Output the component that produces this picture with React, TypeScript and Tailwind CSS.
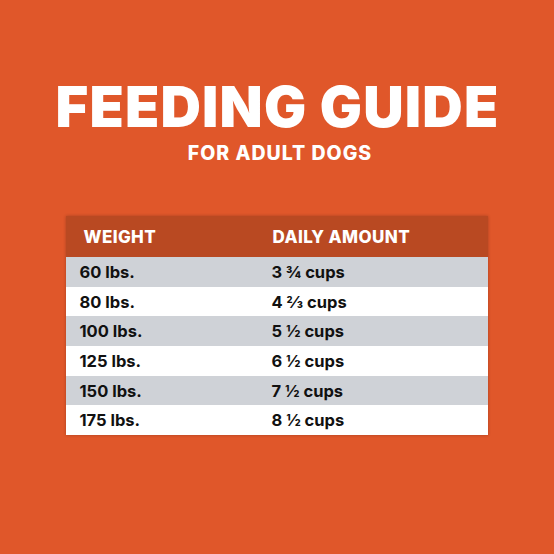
import React from "react";

const rows = [
  ["60 lbs.", "3 ¾ cups"],
  ["80 lbs.", "4 ⅔ cups"],
  ["100 lbs.", "5 ½ cups"],
  ["125 lbs.", "6 ½ cups"],
  ["150 lbs.", "7 ½ cups"],
  ["175 lbs.", "8 ½ cups"],
];

export default function App() {
  return (
    <div
      className="w-[554px] h-[554px] bg-[#e0572a] flex flex-col items-center"
      style={{ fontFamily: "Inter, 'Noto Sans', sans-serif" }}
    >
      <h1 className="mt-[75px] ml-[1px] text-white font-black text-[56px] leading-[64px] tracking-[1.2px]">
        FEEDING GUIDE
      </h1>
      <div className="mt-[3px] ml-[6px] text-white font-extrabold text-[19.5px] leading-[22px] tracking-[1px]">
        FOR ADULT DOGS
      </div>
      <div className="mt-[52px] w-[422px] ml-[-1px] shadow-[0_0_3px_rgba(0,0,0,0.25)]">
        <div className="h-[41px] pt-[3px] bg-[#b94922] flex items-center text-white font-extrabold text-[17px] tracking-[0.4px]">
          <div className="w-[207px] pl-[18px]">WEIGHT</div>
          <div>DAILY AMOUNT</div>
        </div>
        {rows.map(([w, a], i) => (
          <div
            key={w}
            className={`h-[29.7px] pt-[1px] flex items-center text-[#111] font-bold text-[16.5px] ${
              i % 2 === 0 ? "bg-[#cfd2d7]" : "bg-white"
            }`}
          >
            <div className="w-[206px] pl-[14px]">{w}</div>
            <div>{a}</div>
          </div>
        ))}
      </div>
    </div>
  );
}
